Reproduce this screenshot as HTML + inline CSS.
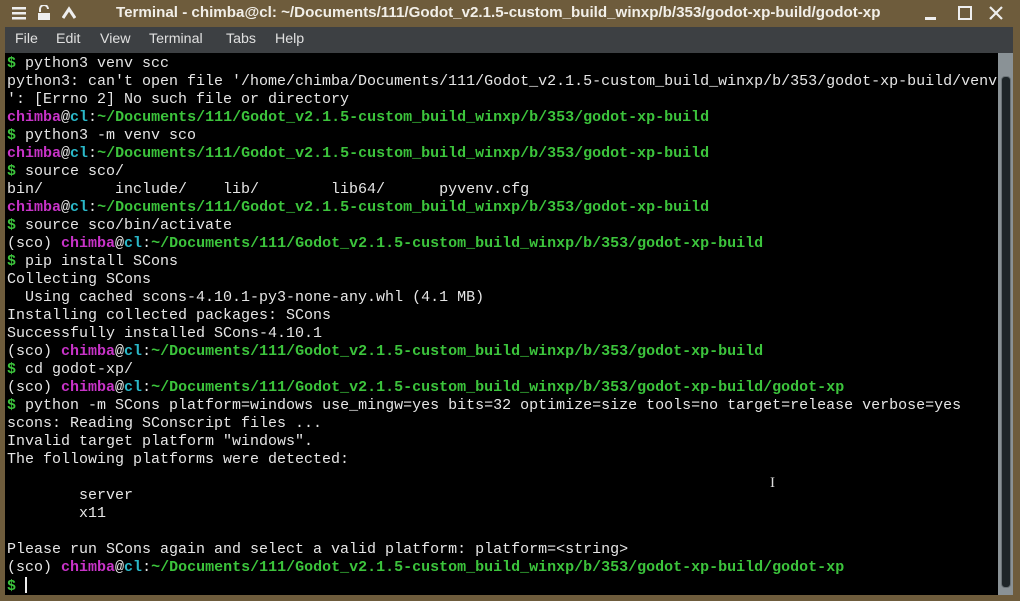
<!DOCTYPE html><html><head><style>
body{margin:0;width:1020px;height:601px;background:#6e5c3c;position:relative;overflow:hidden;font-family:"Liberation Sans",sans-serif}
#title{position:absolute;left:0;top:0;width:1020px;height:27px;background:#6e5c3c;color:#f2efe8;font-weight:bold;font-size:15.15px}
#title .t{position:absolute;left:116px;top:4px;white-space:nowrap}
#menu{position:absolute;left:5px;top:27px;width:1008px;height:26px;background:#3d4043;color:#e0e0e0;font-size:14.2px}
#menu span{position:absolute;top:4px}
#term{position:absolute;left:5px;top:53px;width:993px;height:542px;background:#000;}
#sb{position:absolute;left:998px;top:53px;width:15px;height:542px;background:#8a9296}
#sb div{position:absolute;left:3px;top:23px;width:8px;height:510px;background:#1e2528;border:1px solid #6a7276;border-radius:4px}
pre{margin:0;position:absolute;left:2px;top:2px;font-family:"Liberation Mono",monospace;font-size:15px;line-height:18px;color:#e6e6e6}
.g{color:#3cc43c;font-weight:bold}.m{color:#c833c8;font-weight:bold}.c{color:#2ab8c8;font-weight:bold}
</style></head><body>
<div id="title">
<svg style="position:absolute;left:12px;top:6px" width="14" height="14"><rect x="0" y="1" width="14" height="2.5" fill="#eee"/><rect x="0" y="6" width="14" height="2.5" fill="#eee"/><rect x="0" y="11" width="14" height="2.5" fill="#eee"/></svg>
<svg style="position:absolute;left:37px;top:5px" width="14" height="16"><path d="M3 7V4a4 4 0 0 1 8 0" stroke="#eee" stroke-width="2" fill="none"/><rect x="1" y="8" width="12" height="7" fill="#eee"/></svg>
<svg style="position:absolute;left:62px;top:6px" width="14" height="14"><path d="M1 12L7 3L13 12" stroke="#eee" stroke-width="3" fill="none"/></svg>
<span class="t">Terminal - chimba@cl: ~/Documents/111/Godot_v2.1.5-custom_build_winxp/b/353/godot-xp-build/godot-xp</span>
<svg style="position:absolute;left:920px;top:6px" width="90" height="16"><rect x="5" y="11" width="11" height="3" fill="#eee"/><rect x="39" y="1" width="12" height="12" stroke="#eee" stroke-width="2" fill="none"/><path d="M70 1L82 13M82 1L70 13" stroke="#eee" stroke-width="2.2"/></svg>
</div>
<div id="menu"><span style="left:10px">File</span><span style="left:51px">Edit</span><span style="left:95px">View</span><span style="left:144px">Terminal</span><span style="left:221px">Tabs</span><span style="left:270px">Help</span></div>
<div id="term"><pre><span class="g">$</span> python3 venv scc
python3: can't open file '/home/chimba/Documents/111/Godot_v2.1.5-custom_build_winxp/b/353/godot-xp-build/venv
': [Errno 2] No such file or directory
<span class="m">chimba</span>@<span class="c">cl</span>:<span class="g">~/Documents/111/Godot_v2.1.5-custom_build_winxp/b/353/godot-xp-build</span>
<span class="g">$</span> python3 -m venv sco
<span class="m">chimba</span>@<span class="c">cl</span>:<span class="g">~/Documents/111/Godot_v2.1.5-custom_build_winxp/b/353/godot-xp-build</span>
<span class="g">$</span> source sco/
bin/        include/    lib/        lib64/      pyvenv.cfg
<span class="m">chimba</span>@<span class="c">cl</span>:<span class="g">~/Documents/111/Godot_v2.1.5-custom_build_winxp/b/353/godot-xp-build</span>
<span class="g">$</span> source sco/bin/activate
(sco) <span class="m">chimba</span>@<span class="c">cl</span>:<span class="g">~/Documents/111/Godot_v2.1.5-custom_build_winxp/b/353/godot-xp-build</span>
<span class="g">$</span> pip install SCons
Collecting SCons
  Using cached scons-4.10.1-py3-none-any.whl (4.1 MB)
Installing collected packages: SCons
Successfully installed SCons-4.10.1
(sco) <span class="m">chimba</span>@<span class="c">cl</span>:<span class="g">~/Documents/111/Godot_v2.1.5-custom_build_winxp/b/353/godot-xp-build</span>
<span class="g">$</span> cd godot-xp/
(sco) <span class="m">chimba</span>@<span class="c">cl</span>:<span class="g">~/Documents/111/Godot_v2.1.5-custom_build_winxp/b/353/godot-xp-build/godot-xp</span>
<span class="g">$</span> python -m SCons platform=windows use_mingw=yes bits=32 optimize=size tools=no target=release verbose=yes
scons: Reading SConscript files ...
Invalid target platform "windows".
The following platforms were detected:

        server
        x11

Please run SCons again and select a valid platform: platform=&lt;string&gt;
(sco) <span class="m">chimba</span>@<span class="c">cl</span>:<span class="g">~/Documents/111/Godot_v2.1.5-custom_build_winxp/b/353/godot-xp-build/godot-xp</span>
<span class="g">$</span> <span style="display:inline-block;width:2px;height:16px;background:#eee;vertical-align:-3px"></span></pre>
<div style="position:absolute;left:765px;top:422px;color:#ddd;font-family:'Liberation Serif',serif;font-size:15px">I</div>
</div>
<div id="sb"><div></div></div>
</body></html>
